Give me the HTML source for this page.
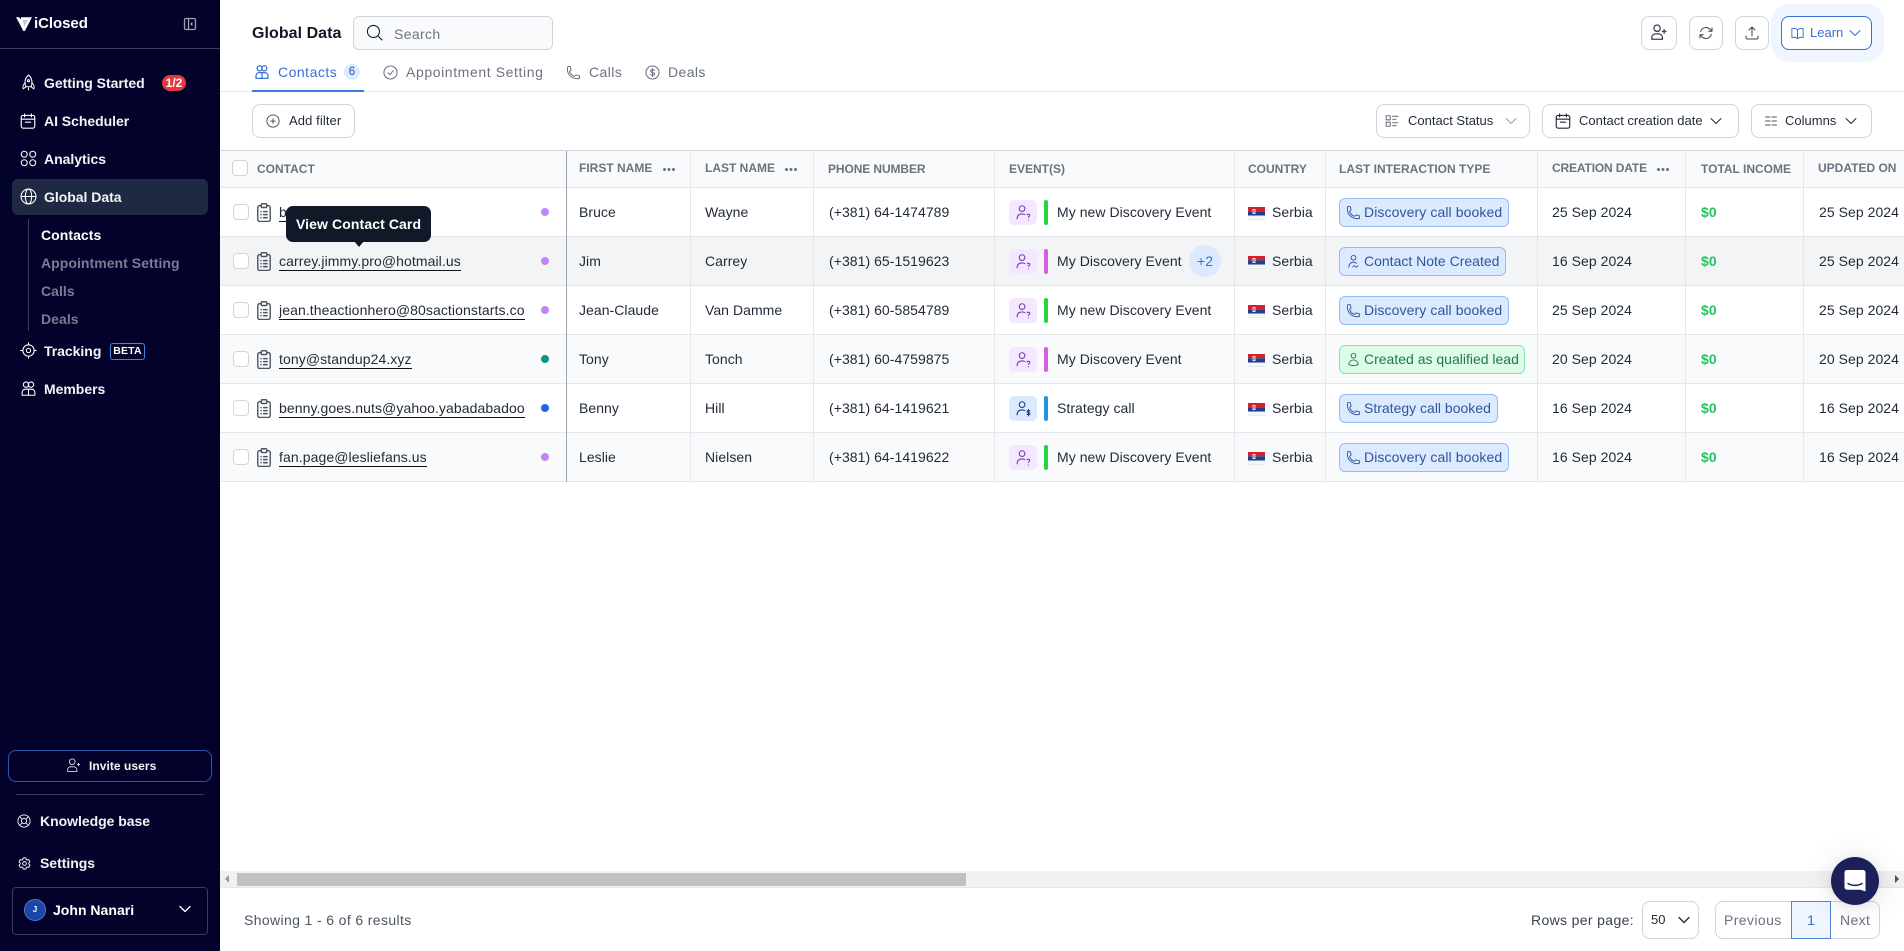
<!DOCTYPE html>
<html><head><meta charset="utf-8"><title>Global Data</title>
<style>
*{box-sizing:border-box}
html,body{margin:0;width:1904px;height:951px;overflow:hidden;background:#fff;font-family:"Liberation Sans",sans-serif;color:#111827}
.t{position:absolute;white-space:nowrap;line-height:20px;font-size:14px;letter-spacing:0}
svg.i{position:absolute;fill:none;stroke:currentColor;stroke-width:1.5;stroke-linecap:round;stroke-linejoin:round;overflow:visible}
.b{position:absolute}
#side{position:absolute;left:0;top:0;width:220px;height:951px;background:#03022a;color:#fff}
#side .n{font-weight:700;color:#f3f4f6;letter-spacing:-.03px}
#side .s{color:#7b7b93;font-weight:700;left:41px;letter-spacing:.05px}
.btn{position:absolute;background:#fff;border:1px solid #d1d5db;border-radius:8px}
.th{font-size:12px;font-weight:700;color:#6b7280;top:159px;letter-spacing:0}
.dots{position:absolute;top:168px;width:12px;height:3px;background:radial-gradient(circle at 1.5px 1.5px,#6b7280 1.4px,transparent 1.6px) 0 0/4.5px 3px repeat-x}
.vl{position:absolute;top:151px;height:331px;width:1px;background:#e5e7eb}
.r{position:absolute;left:220px;width:1684px;height:49px;border-bottom:1px solid #e5e7eb;color:#1f2937;background:#fff}
.r.a{background:#f9fafb}.r.h{background:#f3f4f6}
.r>.t{top:14px;letter-spacing:.05px}
.r .cb{position:absolute;left:13px;top:16px;width:16px;height:16px;border:1px solid #d1d5db;border-radius:4px;background:#fff}
.r .em{left:59px;border-bottom:1px solid #111;line-height:18px;top:15px;padding-bottom:0;letter-spacing:.09px}
.r .dot{position:absolute;left:321px;top:20px;width:8px;height:8px;border-radius:50%;background:#c084fc}
.ev{position:absolute;left:789px;top:12px;width:28px;height:25px;border-radius:5px;background:#f3e8ff;color:#6d3fb5}
.ev.bl{background:#dbeafe;color:#1e3a8a}
.ev svg{left:6px;top:4px;width:17px;height:17px}
.bar{position:absolute;left:824px;top:12px;width:4px;height:25px;border-radius:2px;background:#22d63f}
.bar.p{background:#d65fe0}.bar.c{background:#2494e6}
.fl{position:absolute;left:1028px;top:19px;width:17px;height:13px}
.bd{position:absolute;left:1119px;top:10px;height:29px;border:1px solid #93bdf0;border-radius:6px;background:#dbeafe;color:#31559c;font-size:14px;line-height:27px;padding-left:24px;white-space:nowrap;letter-spacing:0}
.bd.d{letter-spacing:.1px}
.bd.g{background:#dcfce7;border-color:#86e5a8;color:#1f7a4d}
.bd svg{left:6px;top:6px;width:15px;height:15px}
.inc{color:#22c55e;font-weight:700}
</style></head>
<body>
<svg width="0" height="0" style="position:absolute">
<defs>
<symbol id="phone" viewBox="0 0 24 24"><path d="M2.250 6.750c0 8.284 6.716 15 15 15h2.250a2.250 2.250 0 0 0 2.250-2.250v-1.372c0-.516-.351-.966-.852-1.091l-4.423-1.106c-.44-.11-.902.055-1.173.417l-.97 1.293c-.282.376-.769.542-1.210.38a12.035 12.035 0 0 1-7.143-7.143c-.162-.441.004-.928.38-1.210l1.293-.97c.363-.271.527-.734.417-1.173L6.963 3.102a1.125 1.125 0 0 0-1.091-.852H4.500A2.250 2.250 0 0 0 2.250 4.500v2.250Z"/></symbol>
<symbol id="user" viewBox="0 0 24 24"><path d="M15.750 6a3.750 3.750 0 1 1-7.500 0 3.750 3.750 0 0 1 7.500 0ZM4.501 20.118a7.500 7.500 0 0 1 14.998 0A17.933 17.933 0 0 1 12 21.750c-2.676 0-5.216-.584-7.499-1.632Z"/></symbol>
<symbol id="note" viewBox="0 0 24 24"><path d="M15.750 6a3.750 3.750 0 1 1-7.500 0 3.750 3.750 0 0 1 7.500 0Z"/><path d="M4.500 21c0-4.500 3-8 7.500-8 2 0 3.600.7 4.800 1.800"/><path d="M11 20.500c1.500-2 3-2 4-.5s2.500 1 4-1"/></symbol>
<symbol id="evq" viewBox="0 0 24 24"><circle cx="10" cy="6.500" r="4"/><path d="M3 21c0-4.500 2.500-7 7-7 1.500 0 2.800.3 3.800 1"/><path d="M17 15.500c.5-1.500 4-1.500 4 .5 0 1.500-2 1.500-2 3M19 22.500v.1"/></symbol>
<symbol id="evd" viewBox="0 0 24 24"><circle cx="10" cy="6.500" r="4"/><path d="M3 21c0-4.500 2.500-7 7-7 1.500 0 2.800.3 3.800 1"/><path d="M21 15.500c-1-1-4-1-4 .7 0 2 4 1 4 3 0 1.700-3 1.700-4 .7M19 13.500v9"/></symbol>
<symbol id="clip" viewBox="3 1 18 22" preserveAspectRatio="none"><rect x="4" y="4" width="16" height="18.500" rx="2.500"/><rect x="8.500" y="1.800" width="7" height="4.400" rx="1.200" fill="#fff"/><path d="M11.500 11h4.500M11.500 14.500h4.500M11.500 18h4.500M8 11h.3M8 14.500h.3M8 18h.3"/></symbol>
<symbol id="chev" viewBox="0 0 24 24"><path d="m19.500 8.250-7.500 7.500-7.500-7.500"/></symbol>
<symbol id="cal" viewBox="0 0 24 24"><rect x="3" y="4.500" width="18" height="17" rx="2.500"/><path d="M7.500 2.500v4M16.500 2.500v4M3 9.500h18M8.500 13.500h7"/></symbol>
<symbol id="users" viewBox="0 0 24 24"><circle cx="8.500" cy="6.500" r="3.800"/><circle cx="15.500" cy="6.500" r="3.800"/><path d="M3 21.500v-3.500c0-3 2-5 5-5h8c3 0 5 2 5 5v3.500zM12 13v8.500"/></symbol>
<symbol id="flag" viewBox="0 0 17 13"><rect width="17" height="4.300" y="0" fill="#d6202f"/><rect width="17" height="4.300" y="4.300" fill="#1c3f94"/><rect width="17" height="4.400" y="8.600" fill="#f4f5f7"/><rect x="4.500" y="2" width="3" height="5" fill="#f3e3d3"/><rect x="5.500" y="3" width="1" height="3" fill="#b3202a"/><rect y="12.400" width="17" height=".6" fill="#dfe3e8"/></symbol>
</defs>
</svg>

<!-- Sidebar -->
<div id="side">
<svg class="b" style="left:16px;top:17px" width="16" height="14" viewBox="0 0 16 14"><path d="M0 .3l3 0 2 2V.3h11L8.800 14H7.300L3.500 6.500z" fill="#fff"/><path d="M6.500 3h5.500L8.500 9.500z" fill="#03022a" opacity=".22"/></svg>
<div class="t" style="left:34px;top:14px;font-size:15px;font-weight:700;color:#fff;letter-spacing:-.05px">iClosed</div>
<svg class="i" style="left:184px;top:18px;color:#a0a3b1;stroke-width:1.3" width="12" height="12" viewBox="0 0 12 12"><rect x=".5" y=".5" width="11" height="11" rx="1.500"/><path d="M4.500.5v11M8 5l-1 1 1 1"/></svg>
<div class="b" style="left:0;top:48px;width:220px;height:1px;background:#3c3c58"></div>

<svg class="i" style="left:20px;top:74px" width="17" height="17" viewBox="0 0 24 24"><path d="M12 1.500c3.500 3 5 6.500 5 10.500 0 2-.5 4-1.300 6h-7.400C7.500 16 7 14 7 12c0-4 1.500-7.500 5-10.500z"/><circle cx="12" cy="9.500" r="1.500"/><path d="M7.500 12.500C4.500 14.500 3.500 18 4.500 21l4-3M16.500 12.500c3 2 4 5.500 3 8.500l-4-3M12 20v2.500"/></svg>
<div class="t n" style="left:44px;top:73px">Getting Started</div>
<div class="b" style="left:162px;top:75px;width:24px;height:16px;border-radius:8px;background:#e5393f;color:#fff;font-size:12px;font-weight:700;line-height:16px;text-align:center">1/2</div>

<svg class="i" style="left:19px;top:112px" width="18" height="18"><use href="#cal"/></svg>
<div class="t n" style="left:44px;top:111px">AI Scheduler</div>

<svg class="i" style="left:20px;top:150px" width="17" height="17" viewBox="0 0 24 24"><circle cx="6" cy="6" r="4.200"/><circle cx="18" cy="6" r="4.200"/><circle cx="6" cy="18" r="4.200"/><circle cx="18" cy="18" r="4.200"/></svg>
<div class="t n" style="left:44px;top:149px">Analytics</div>

<div class="b" style="left:12px;top:179px;width:196px;height:36px;border-radius:6px;background:#1f2943"></div>
<svg class="i" style="left:20px;top:188px" width="17" height="17" viewBox="0 0 24 24"><circle cx="12" cy="12" r="10.500"/><ellipse cx="12" cy="12" rx="4.500" ry="10.500"/><path d="M1.500 12h21"/></svg>
<div class="t n" style="left:44px;top:187px">Global Data</div>

<div class="b" style="left:28px;top:219px;width:1px;height:112px;background:#3c3c58"></div>
<div class="t s" style="top:225px;color:#fff">Contacts</div>
<div class="t s" style="top:253px">Appointment Setting</div>
<div class="t s" style="top:281px">Calls</div>
<div class="t s" style="top:309px">Deals</div>

<svg class="i" style="left:20px;top:342px" width="17" height="17" viewBox="0 0 24 24"><circle cx="12" cy="12" r="8"/><circle cx="12" cy="12" r="3"/><path d="M12 1v3M12 20v3M1 12h3M20 12h3"/></svg>
<div class="t n" style="left:44px;top:341px">Tracking</div>
<div class="b" style="left:110px;top:343px;width:35px;height:17px;border:1px solid #4f7fdc;border-radius:3px;color:#fff;font-size:10.500px;font-weight:700;line-height:15px;text-align:center;letter-spacing:.2px">BETA</div>

<svg class="i" style="left:20px;top:380px" width="17" height="17"><use href="#users"/></svg>
<div class="t n" style="left:44px;top:379px">Members</div>

<div class="b" style="left:8px;top:750px;width:204px;height:32px;border:1px solid #2f56ad;border-radius:8px"></div>
<svg class="i" style="left:66px;top:758px;color:#d5d6de" width="15" height="15" viewBox="0 0 24 24"><circle cx="10" cy="6" r="4.500"/><path d="M2.500 21.500v-2c0-3.500 2.500-5.500 5.500-5.500h4c3 0 5.500 2 5.500 5.500v2zM20 8.500v4M18 10.500h4"/></svg>
<div class="t" style="left:89px;top:756px;font-size:12px;font-weight:700;color:#f3f4f6;letter-spacing:.05px">Invite users</div>
<div class="b" style="left:16px;top:794px;width:188px;height:1px;background:#3c3c58"></div>

<svg class="i" style="left:17px;top:814px" width="14" height="14" viewBox="0 0 24 24"><circle cx="12" cy="12" r="10.500"/><circle cx="12" cy="12" r="4.500"/><path d="M5 5l4 4M19 5l-4 4M5 19l4-4M19 19l-4-4"/></svg>
<div class="t n" style="left:40px;top:811px">Knowledge base</div>
<svg class="i" style="left:17px;top:856px" width="15" height="15" viewBox="0 0 24 24"><path d="M9.594 3.940c.09-.542.56-.94 1.110-.94h2.593c.55 0 1.020.398 1.110.94l.213 1.281c.063.374.313.686.645.87.074.04.147.083.22.127.325.196.72.257 1.075.124l1.217-.456a1.125 1.125 0 0 1 1.370.49l1.296 2.247a1.125 1.125 0 0 1-.26 1.431l-1.003.827c-.293.241-.438.613-.43.992a7.723 7.723 0 0 1 0 .255c-.008.378.137.75.43.991l1.004.827c.424.35.534.955.26 1.430l-1.298 2.247a1.125 1.125 0 0 1-1.369.491l-1.217-.456c-.355-.133-.75-.072-1.076.124a6.470 6.470 0 0 1-.22.128c-.331.183-.581.495-.644.869l-.213 1.281c-.09.543-.56.94-1.110.94h-2.594c-.55 0-1.019-.398-1.110-.94l-.213-1.281c-.062-.374-.312-.686-.644-.87a6.520 6.520 0 0 1-.22-.127c-.325-.196-.72-.257-1.076-.124l-1.217.456a1.125 1.125 0 0 1-1.369-.49l-1.297-2.247a1.125 1.125 0 0 1 .26-1.431l1.004-.827c.292-.24.437-.613.43-.991a6.932 6.932 0 0 1 0-.255c.007-.38-.138-.751-.43-.992l-1.004-.827a1.125 1.125 0 0 1-.26-1.430l1.297-2.247a1.125 1.125 0 0 1 1.370-.491l1.216.456c.356.133.751.072 1.076-.124.072-.044.146-.086.22-.128.332-.183.582-.495.644-.869l.214-1.280Z"/><circle cx="12" cy="12" r="3"/></svg>
<div class="t n" style="left:40px;top:853px">Settings</div>

<div class="b" style="left:12px;top:887px;width:196px;height:48px;border:1px solid #3c3c58;border-radius:4px"></div>
<div class="b" style="left:24px;top:899px;width:22px;height:22px;border-radius:50%;background:#1e46a8;border:1px solid #5577c8;color:#fff;font-size:8px;font-weight:700;line-height:20px;text-align:center">J</div>
<div class="t" style="left:53px;top:900px;color:#fff;font-weight:700;letter-spacing:.02px">John Nanari</div>
<svg class="i" style="left:177px;top:901px;stroke-width:2" width="16" height="16"><use href="#chev"/></svg>
</div>

<!-- Top header -->
<div class="t" style="left:252px;top:24px;font-size:16px;font-weight:700;color:#111827;letter-spacing:.05px">Global Data</div>
<div class="b" style="left:353px;top:16px;width:200px;height:34px;background:#f9fafb;border:1px solid #d1d5db;border-radius:6px"></div>
<svg class="i" style="left:366px;top:24px;width:17px;height:17px" viewBox="0 0 24 24"><circle cx="10.500" cy="10.500" r="8.500"/><path d="M17 17l5.500 5.500"/></svg>
<div class="t" style="left:394px;top:24px;color:#6b7280;letter-spacing:.35px">Search</div>

<svg class="i" style="left:254px;top:64px;color:#3b6fd4;stroke-width:1.900" width="16" height="16"><use href="#users"/></svg>
<div class="t" style="left:278px;top:62px;color:#3b6fd4;letter-spacing:.5px">Contacts</div>
<div class="b" style="left:344px;top:64px;width:16px;height:16px;border-radius:50%;background:#dbeafe;color:#31559c;font-size:11.500px;line-height:16px;text-align:center">6</div>
<div class="b" style="left:252px;top:90px;width:112px;height:2px;background:#3b7ddd;z-index:2"></div>
<svg class="i" style="left:383px;top:65px;color:#5f6672" width="15" height="15" viewBox="0 0 24 24"><circle cx="12" cy="12" r="10.500"/><path d="M8 12.500l3 3 5.500-6.500"/></svg>
<div class="t" style="left:406px;top:62px;color:#6b7280;letter-spacing:.6px">Appointment Setting</div>
<svg class="i" style="left:566px;top:65px;color:#5f6672" width="15" height="15"><use href="#phone"/></svg>
<div class="t" style="left:589px;top:62px;color:#6b7280;letter-spacing:.4px">Calls</div>
<svg class="i" style="left:645px;top:65px;color:#5f6672" width="15" height="15" viewBox="0 0 24 24"><circle cx="12" cy="12" r="10.500"/><path d="M15.500 8.500c-1-1.300-6.500-1.500-6.500 1.200 0 3 6.500 1.500 6.500 4.600 0 2.500-5.500 2.500-6.700.9M12 5.500v13"/></svg>
<div class="t" style="left:668px;top:62px;color:#6b7280;letter-spacing:.4px">Deals</div>
<div class="b" style="left:220px;top:91px;width:1684px;height:1px;background:#e5e7eb"></div>

<!-- Right buttons -->
<div class="b" style="left:1771px;top:4px;width:113px;height:58px;border-radius:18px;background:#eff6ff"></div>
<div class="btn" style="left:1641px;top:16px;width:36px;height:34px"></div>
<svg class="i" style="left:1650px;top:24px;color:#374151;stroke-width:1.800" width="17" height="17" viewBox="0 0 24 24"><circle cx="10" cy="6" r="4.500"/><path d="M2.500 21.500v-2c0-3.500 2.500-5.500 5.500-5.500h4c3 0 5.500 2 5.500 5.500v2zM20 8v5M17.500 10.500h5"/></svg>
<div class="btn" style="left:1689px;top:16px;width:34px;height:34px"></div>
<svg class="i" style="left:1698px;top:25px;color:#374151" width="16" height="16" viewBox="0 0 24 24"><path d="M16.023 9.348h4.992v-.001M2.985 19.644v-4.992m0 0h4.992m-4.993 0 3.181 3.183a8.250 8.250 0 0 0 13.803-3.700M4.031 9.865a8.250 8.250 0 0 1 13.803-3.700l3.181 3.182m0-4.991v4.990"/></svg>
<div class="btn" style="left:1735px;top:16px;width:34px;height:34px"></div>
<svg class="i" style="left:1744px;top:25px;color:#374151" width="16" height="16" viewBox="0 0 24 24"><path d="M3 16.500v2.250A2.250 2.250 0 0 0 5.250 21h13.500A2.250 2.250 0 0 0 21 18.750V16.500m-13.500-9L12 3m0 0 4.500 4.500M12 3v13.500"/></svg>
<div class="btn" style="left:1781px;top:16px;width:91px;height:34px;border-color:#3b6fd4"></div>
<svg class="i" style="left:1790px;top:26px;color:#3b6fd4" width="15" height="15" viewBox="0 0 24 24"><path d="M12 6.042A8.967 8.967 0 0 0 6 3.750c-1.052 0-2.062.18-3 .512v14.250A8.987 8.987 0 0 1 6 18c2.305 0 4.408.867 6 2.292m0-14.250a8.966 8.966 0 0 1 6-2.292c1.052 0 2.062.18 3 .512v14.250A8.987 8.987 0 0 0 18 18a8.967 8.967 0 0 0-6 2.292m0-14.250v14.250"/></svg>
<div class="t" style="left:1810px;top:23px;color:#3b6fd4;font-size:13px">Learn</div>
<svg class="i" style="left:1847px;top:25px;color:#3b6fd4" width="16" height="16"><use href="#chev"/></svg>

<!-- Filter row -->
<div class="btn" style="left:252px;top:104px;width:103px;height:34px"></div>
<svg class="i" style="left:266px;top:114px;color:#374151" width="14" height="14" viewBox="0 0 24 24"><circle cx="12" cy="12" r="10.500"/><path d="M12 8v8M8 12h8"/></svg>
<div class="t" style="left:289px;top:111px;font-size:13px;color:#1f2937;letter-spacing:.1px">Add filter</div>

<div class="btn" style="left:1376px;top:104px;width:154px;height:34px"></div>
<svg class="i" style="left:1385px;top:114px;color:#6b7280;stroke-width:1.800" width="14" height="14" viewBox="0 0 24 24"><rect x="2" y="3" width="7" height="7"/><rect x="2" y="14" width="7" height="7"/><path d="M13 4h9M13 9h6M13 15h9M13 20h6"/></svg>
<div class="t" style="left:1408px;top:111px;font-size:13px;color:#1f2937">Contact Status</div>
<svg class="i" style="left:1503px;top:113px;color:#9ca3af" width="16" height="16"><use href="#chev"/></svg>

<div class="btn" style="left:1542px;top:104px;width:197px;height:34px"></div>
<svg class="i" style="left:1554px;top:112px;color:#1f2937" width="18" height="18"><use href="#cal"/></svg>
<div class="t" style="left:1579px;top:111px;font-size:13px;color:#1f2937">Contact creation date</div>
<svg class="i" style="left:1708px;top:113px;color:#1f2937" width="16" height="16"><use href="#chev"/></svg>

<div class="btn" style="left:1751px;top:104px;width:121px;height:34px"></div>
<svg class="i" style="left:1765px;top:115px;color:#4b5563;stroke-width:2" width="12" height="12" viewBox="0 0 24 24"><path d="M1 4h9M1 12h9M1 20h9M14 4h9M14 12h9M14 20h9"/></svg>
<div class="t" style="left:1785px;top:111px;font-size:13px;color:#1f2937">Columns</div>
<svg class="i" style="left:1843px;top:113px;color:#1f2937" width="16" height="16"><use href="#chev"/></svg>

<!-- Table header -->
<div class="b" style="left:220px;top:150px;width:1684px;height:38px;background:#f9fafb;border-top:1px solid #d1d5db;border-bottom:1px solid #e5e7eb"></div>
<div class="b" style="left:232px;top:160px;width:16px;height:16px;border:1px solid #d1d5db;border-radius:4px;background:#fff"></div>
<div class="t th" style="left:257px">CONTACT</div>
<div class="t th" style="left:579px;top:158px">FIRST NAME</div><div class="dots" style="left:663px"></div>
<div class="t th" style="left:705px;top:158px">LAST NAME</div><div class="dots" style="left:785px"></div>
<div class="t th" style="left:828px;letter-spacing:-.1px">PHONE NUMBER</div>
<div class="t th" style="left:1009px">EVENT(S)</div>
<div class="t th" style="left:1248px">COUNTRY</div>
<div class="t th" style="left:1339px">LAST INTERACTION TYPE</div>
<div class="t th" style="left:1552px;top:158px;letter-spacing:-.15px">CREATION DATE</div><div class="dots" style="left:1657px"></div>
<div class="t th" style="left:1701px">TOTAL INCOME</div>
<div class="t th" style="left:1818px;top:158px">UPDATED ON</div>

<!-- Rows -->
<div class="r" style="top:188px">
<div class="cb"></div><svg class="i" style="left:37px;top:15px;color:#4b5563;stroke-width:1.800" width="14" height="19"><use href="#clip"/></svg>
<div class="t em">bruce@wayne.com</div><div class="dot"></div>
<div class="t" style="left:359px">Bruce</div><div class="t" style="left:485px">Wayne</div><div class="t" style="left:609px">(+381) 64-1474789</div>
<div class="ev"><svg class="i"><use href="#evq"/></svg></div><div class="bar"></div><div class="t" style="left:837px">My new Discovery Event</div>
<svg class="fl"><use href="#flag"/></svg><div class="t" style="left:1052px">Serbia</div>
<div class="bd d" style="width:170px"><svg class="i"><use href="#phone"/></svg>Discovery call booked</div>
<div class="t" style="left:1332px">25 Sep 2024</div><div class="t inc" style="left:1481px">$0</div><div class="t" style="left:1599px">25 Sep 2024</div>
</div>
<div class="r h" style="top:237px">
<div class="cb"></div><svg class="i" style="left:37px;top:15px;color:#4b5563;stroke-width:1.800" width="14" height="19"><use href="#clip"/></svg>
<div class="t em">carrey.jimmy.pro@hotmail.us</div><div class="dot"></div>
<div class="t" style="left:359px">Jim</div><div class="t" style="left:485px">Carrey</div><div class="t" style="left:609px">(+381) 65-1519623</div>
<div class="ev"><svg class="i"><use href="#evq"/></svg></div><div class="bar p"></div><div class="t" style="left:837px">My Discovery Event</div>
<div class="b" style="left:969px;top:8px;width:32px;height:32px;border-radius:50%;background:#dbeafe;color:#3b6fd4;font-size:14px;line-height:32px;text-align:center">+2</div>
<svg class="fl"><use href="#flag"/></svg><div class="t" style="left:1052px">Serbia</div>
<div class="bd" style="width:167px"><svg class="i"><use href="#note"/></svg>Contact Note Created</div>
<div class="t" style="left:1332px">16 Sep 2024</div><div class="t inc" style="left:1481px">$0</div><div class="t" style="left:1599px">25 Sep 2024</div>
</div>
<div class="r" style="top:286px">
<div class="cb"></div><svg class="i" style="left:37px;top:15px;color:#4b5563;stroke-width:1.800" width="14" height="19"><use href="#clip"/></svg>
<div class="t em">jean.theactionhero@80sactionstarts.co</div><div class="dot"></div>
<div class="t" style="left:359px">Jean-Claude</div><div class="t" style="left:485px">Van Damme</div><div class="t" style="left:609px">(+381) 60-5854789</div>
<div class="ev"><svg class="i"><use href="#evq"/></svg></div><div class="bar"></div><div class="t" style="left:837px">My new Discovery Event</div>
<svg class="fl"><use href="#flag"/></svg><div class="t" style="left:1052px">Serbia</div>
<div class="bd d" style="width:170px"><svg class="i"><use href="#phone"/></svg>Discovery call booked</div>
<div class="t" style="left:1332px">25 Sep 2024</div><div class="t inc" style="left:1481px">$0</div><div class="t" style="left:1599px">25 Sep 2024</div>
</div>
<div class="r a" style="top:335px">
<div class="cb"></div><svg class="i" style="left:37px;top:15px;color:#4b5563;stroke-width:1.800" width="14" height="19"><use href="#clip"/></svg>
<div class="t em">tony@standup24.xyz</div><div class="dot" style="background:#0d9488"></div>
<div class="t" style="left:359px">Tony</div><div class="t" style="left:485px">Tonch</div><div class="t" style="left:609px">(+381) 60-4759875</div>
<div class="ev"><svg class="i"><use href="#evq"/></svg></div><div class="bar p"></div><div class="t" style="left:837px">My Discovery Event</div>
<svg class="fl"><use href="#flag"/></svg><div class="t" style="left:1052px">Serbia</div>
<div class="bd g" style="width:186px"><svg class="i"><use href="#user"/></svg>Created as qualified lead</div>
<div class="t" style="left:1332px">20 Sep 2024</div><div class="t inc" style="left:1481px">$0</div><div class="t" style="left:1599px">20 Sep 2024</div>
</div>
<div class="r" style="top:384px">
<div class="cb"></div><svg class="i" style="left:37px;top:15px;color:#4b5563;stroke-width:1.800" width="14" height="19"><use href="#clip"/></svg>
<div class="t em">benny.goes.nuts@yahoo.yabadabadoo</div><div class="dot" style="background:#2563eb"></div>
<div class="t" style="left:359px">Benny</div><div class="t" style="left:485px">Hill</div><div class="t" style="left:609px">(+381) 64-1419621</div>
<div class="ev bl"><svg class="i"><use href="#evd"/></svg></div><div class="bar c"></div><div class="t" style="left:837px">Strategy call</div>
<svg class="fl"><use href="#flag"/></svg><div class="t" style="left:1052px">Serbia</div>
<div class="bd" style="width:159px"><svg class="i"><use href="#phone"/></svg>Strategy call booked</div>
<div class="t" style="left:1332px">16 Sep 2024</div><div class="t inc" style="left:1481px">$0</div><div class="t" style="left:1599px">16 Sep 2024</div>
</div>
<div class="r a" style="top:433px">
<div class="cb"></div><svg class="i" style="left:37px;top:15px;color:#4b5563;stroke-width:1.800" width="14" height="19"><use href="#clip"/></svg>
<div class="t em">fan.page@lesliefans.us</div><div class="dot"></div>
<div class="t" style="left:359px">Leslie</div><div class="t" style="left:485px">Nielsen</div><div class="t" style="left:609px">(+381) 64-1419622</div>
<div class="ev"><svg class="i"><use href="#evq"/></svg></div><div class="bar"></div><div class="t" style="left:837px">My new Discovery Event</div>
<svg class="fl"><use href="#flag"/></svg><div class="t" style="left:1052px">Serbia</div>
<div class="bd d" style="width:170px"><svg class="i"><use href="#phone"/></svg>Discovery call booked</div>
<div class="t" style="left:1332px">16 Sep 2024</div><div class="t inc" style="left:1481px">$0</div><div class="t" style="left:1599px">16 Sep 2024</div>
</div>

<!-- Column lines -->
<div class="vl" style="left:566px;background:#9ca3af"></div>
<div class="vl" style="left:690px"></div>
<div class="vl" style="left:813px"></div>
<div class="vl" style="left:994px"></div>
<div class="vl" style="left:1234px"></div>
<div class="vl" style="left:1325px"></div>
<div class="vl" style="left:1537px"></div>
<div class="vl" style="left:1685px"></div>
<div class="vl" style="left:1803px"></div>

<!-- Tooltip -->
<div class="b" style="left:286px;top:206px;width:145px;height:36px;border-radius:7px;background:#111827;z-index:5"></div>
<div class="b" style="left:354px;top:241px;width:0;height:0;border-left:5px solid transparent;border-right:5px solid transparent;border-top:6px solid #111827;z-index:5"></div>
<div class="t" style="left:296px;top:214px;color:#fff;font-weight:700;z-index:6;letter-spacing:.1px">View Contact Card</div>

<!-- Scrollbar -->
<div class="b" style="left:220px;top:871px;width:1684px;height:16px;background:#f1f1f1"></div>
<div class="b" style="left:237px;top:873px;width:729px;height:13px;background:#c1c1c1"></div>
<div class="b" style="left:225px;top:875px;width:0;height:0;border-top:4px solid transparent;border-bottom:4px solid transparent;border-right:4px solid #9a9a9a"></div>
<div class="b" style="left:1895px;top:875px;width:0;height:0;border-top:4px solid transparent;border-bottom:4px solid transparent;border-left:4px solid #505050"></div>
<div class="b" style="left:220px;top:887px;width:1684px;height:1px;background:#e5e7eb"></div>

<!-- Footer -->
<div class="t" style="left:244px;top:910px;color:#4b5563;letter-spacing:.37px">Showing 1 - 6 of 6 results</div>
<div class="t" style="left:1531px;top:910px;color:#374151;letter-spacing:.35px">Rows per page:</div>
<div class="btn" style="left:1642px;top:901px;width:57px;height:38px"></div>
<div class="t" style="left:1651px;top:910px;font-size:13px;color:#1f2937">50</div>
<svg class="i" style="left:1676px;top:912px;color:#1f2937;stroke-width:2" width="16" height="16"><use href="#chev"/></svg>
<div class="btn" style="left:1715px;top:901px;width:165px;height:38px"></div>
<div class="t" style="left:1724px;top:910px;color:#6b7280;letter-spacing:.4px">Previous</div>
<div class="b" style="left:1791px;top:901px;width:40px;height:38px;background:#eff6ff;border:1px solid #4f86dc;color:#3b6fd4;font-size:14px;line-height:36px;text-align:center">1</div>
<div class="t" style="left:1840px;top:910px;color:#6b7280;letter-spacing:.35px">Next</div>

<!-- Chat -->
<div class="b" style="left:1831px;top:857px;width:48px;height:48px;border-radius:50%;background:#1d2058;box-shadow:0 1px 8px rgba(0,0,0,.08),0 2px 32px rgba(0,0,0,.12);z-index:8"></div>
<svg class="b" style="left:1844px;top:869px;z-index:9" width="22" height="24" viewBox="0 0 22 24"><path d="M3 1h16a2.500 2.500 0 0 1 2.500 2.500V22.500l-5-1.800H3A2.500 2.500 0 0 1 .5 18.200V3.500A2.500 2.500 0 0 1 3 1z" fill="#fff"/><path d="M4 14.500c4 2.500 10 2.500 14 0" fill="none" stroke="#1d2058" stroke-width="1.400" stroke-linecap="round"/></svg>
</body></html>
